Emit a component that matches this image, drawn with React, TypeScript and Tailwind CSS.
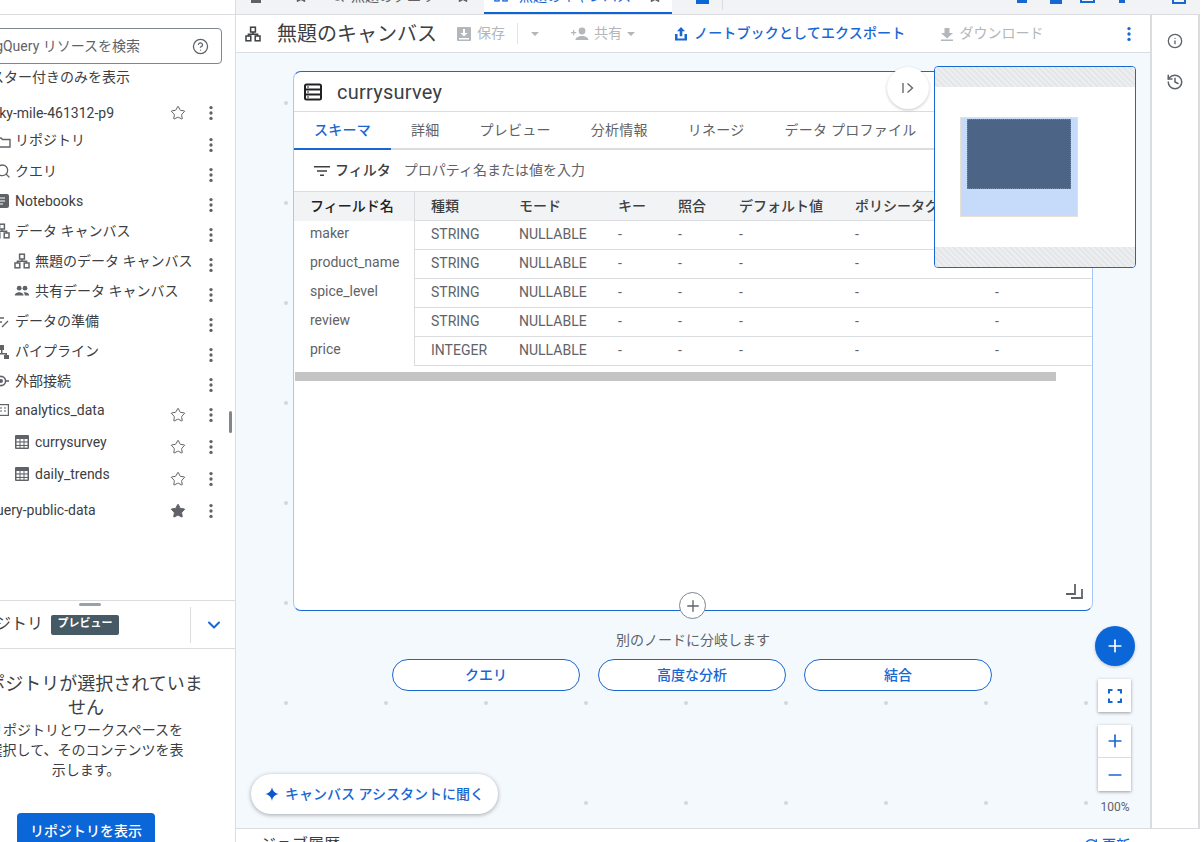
import { ChevronDown, Star, HelpCircle, Plus, Minus, Info, History, Search, RefreshCw } from 'lucide-react';

const font = "font-['Roboto','Noto_Sans_CJK_JP',sans-serif]";

function Kebab({ className = '' }: { className?: string }) {
  return (
    <svg viewBox="0 0 24 24" width="20" height="20" className={className} fill="#5f6368">
      <circle cx="12" cy="5.5" r="2" />
      <circle cx="12" cy="12" r="2" />
      <circle cx="12" cy="18.5" r="2" />
    </svg>
  );
}

function CanvasIcon({ size = 16, color = '#5f6368' }: { size?: number; color?: string }) {
  return (
    <svg viewBox="0 0 16 16" width={size} height={size} fill="none" stroke={color} strokeWidth="1.5">
      <rect x="5.6" y="1.2" width="4.8" height="4.8" />
      <rect x="1" y="10" width="4.8" height="4.8" />
      <rect x="10.2" y="10" width="4.8" height="4.8" />
      <path d="M8 6v2.2H3.4V10M8 8.2h4.6V10" />
    </svg>
  );
}

function TableIcon() {
  return (
    <svg viewBox="0 0 14 14" width="14" height="14" className="shrink-0">
      <rect width="14" height="14" rx="1" fill="#5f6368" />
      <rect x="1.5" y="4" width="3" height="2.4" fill="#fff" />
      <rect x="5.5" y="4" width="3" height="2.4" fill="#fff" />
      <rect x="9.5" y="4" width="3" height="2.4" fill="#fff" />
      <rect x="1.5" y="7.5" width="3" height="2.4" fill="#fff" />
      <rect x="5.5" y="7.5" width="3" height="2.4" fill="#fff" />
      <rect x="9.5" y="7.5" width="3" height="2.4" fill="#fff" />
      <rect x="1.5" y="11" width="3" height="1.6" fill="#fff" />
      <rect x="5.5" y="11" width="3" height="1.6" fill="#fff" />
      <rect x="9.5" y="11" width="3" height="1.6" fill="#fff" />
    </svg>
  );
}

function PeopleIcon() {
  return (
    <svg viewBox="0 0 16 16" width="16" height="16" fill="#5f6368" className="shrink-0">
      <circle cx="5.2" cy="5.2" r="2.4" />
      <circle cx="11" cy="5.2" r="2.4" />
      <path d="M.8 12.5c0-2.2 2.6-3.2 4.4-3.2s4.4 1 4.4 3.2zM10.8 12.5c0-1.4-.5-2.4-1.3-3.1.6-.1 1.1-.1 1.5-.1 1.8 0 4.2 1 4.2 3.2z" />
    </svg>
  );
}

type Row = {
  label: string;
  h: string;
  left: string;
  icon?: React.ReactNode;
  star?: 'off' | 'on';
  lift?: string;
};

const rows: Row[] = [
  { label: 'sky-mile-461312-p9', h: 'h-[30px] mb-[2px]', left: '-ml-[8px]', star: 'off' },
  {
    label: 'リポジトリ', h: 'h-[30px]', left: 'pl-[15px]', lift: 'mb-[10px]',
    icon: <svg viewBox="0 0 16 16" width="16" height="16" className="absolute -left-[5px] top-[4px]" fill="none" stroke="#5f6368" strokeWidth="1.4"><path d="M1 4h5l1.5 1.5H15V13H1z" /></svg>,
  },
  {
    label: 'クエリ', h: 'h-[30px]', left: 'pl-[15px]', lift: 'mb-[8px]',
    icon: <Search size={16} color="#5f6368" className="absolute -left-[5px] top-[3px]" />,
  },
  {
    label: 'Notebooks', h: 'h-[30px]', left: 'pl-[15px]', lift: 'mb-[8px]',
    icon: <svg viewBox="0 0 14 14" width="14" height="14" className="absolute -left-[5px] top-[4px]"><rect width="14" height="14" rx="2" fill="#5f6368" /><path d="M2 4h8M2 7h8M2 10h6" stroke="#fff" strokeWidth="1.2" /></svg>,
  },
  {
    label: 'データ キャンバス', h: 'h-[30px]', left: 'pl-[15px]', lift: 'mb-[8px]',
    icon: <div className="absolute -left-[6px] top-[3px]"><CanvasIcon size={16} /></div>,
  },
  {
    label: '無題のデータ キャンバス', h: 'h-[30px]', left: 'pl-[35px]', lift: 'mb-[8px]',
    icon: <div className="absolute left-[14px] top-[3px]"><CanvasIcon size={16} /></div>,
  },
  {
    label: '共有データ キャンバス', h: 'h-[30px]', left: 'pl-[35px]', lift: 'mb-[8px]',
    icon: <div className="absolute left-[14px] top-[3px]"><PeopleIcon /></div>,
  },
  {
    label: 'データの準備', h: 'h-[30px]', left: 'pl-[15px]', lift: 'mb-[8px]',
    icon: <svg viewBox="0 0 14 14" width="14" height="14" className="absolute -left-[4px] top-[5px]" fill="none" stroke="#5f6368" strokeWidth="1.4"><path d="M0 3h8M0 7h6M6 12l6-6" /></svg>,
  },
  {
    label: 'パイプライン', h: 'h-[30px]', left: 'pl-[15px]', lift: 'mb-[8px]',
    icon: <svg viewBox="0 0 16 16" width="16" height="16" className="absolute -left-[6px] top-[4px]" fill="#5f6368"><rect x="5" y="1" width="5" height="5" /><rect x="0" y="11" width="5" height="4" /><rect x="10" y="11" width="5" height="4" /><path d="M7 6h1.5v3H13v2h-1.5v-.5h-8v.5H2V9h5z" /></svg>,
  },
  {
    label: '外部接続', h: 'h-[30px]', left: 'pl-[15px]', lift: 'mb-[8px]',
    icon: <svg viewBox="0 0 16 16" width="16" height="16" className="absolute -left-[4px] top-[3px]" fill="none" stroke="#5f6368" strokeWidth="1.6"><circle cx="5" cy="8" r="4.6" /><circle cx="5" cy="8" r="1.2" fill="#5f6368" /><path d="M10 8h3" /></svg>,
  },
  {
    label: 'analytics_data', h: 'h-[30px]', left: 'pl-[15px]', star: 'off', lift: 'mb-[10px]',
    icon: <svg viewBox="0 0 12 12" width="12" height="12" className="absolute -left-[3px] top-[4px]" fill="none" stroke="#5f6368" strokeWidth="1.2"><rect x=".6" y=".6" width="10.8" height="10.8" /><path d="M3 4h2M7 4h2M3 7h2M7 7h2" /></svg>,
  },
  { label: 'currysurvey', h: 'mt-[1px] h-[32px]', left: 'pl-[35px]', star: 'off', lift: 'mb-[10px]', icon: <div className="absolute left-[15px] top-[4px]"><TableIcon /></div> },
  { label: 'daily_trends', h: 'h-[32px]', left: 'pl-[35px]', star: 'off', lift: 'mb-[10px]', icon: <div className="absolute left-[15px] top-[4px]"><TableIcon /></div> },
  { label: 'bigquery-public-data', h: 'h-[32px]', left: '-ml-[31px]', star: 'on', lift: 'mb-[2px]' },
];

function TreeRow({ row }: { row: Row }) {
  return (
    <div className={`relative flex items-center pr-[14px] ${row.h}`}>
      {row.icon}
      <span className={`flex-1 whitespace-nowrap text-[14px] text-[#3c4043] ${row.left} ${row.lift ?? ''}`}>{row.label}</span>
      {row.star === 'off' && <Star size={16} color="#5f6368" strokeWidth={1.5} className="mr-[15px]" />}
      {row.star === 'on' && <Star size={16} color="#5f6368" fill="#5f6368" strokeWidth={1.5} className="mr-[15px]" />}
      <Kebab />
    </div>
  );
}

function Sidebar() {
  return (
    <aside className="relative flex h-full w-[236px] shrink-0 flex-col overflow-hidden border-r border-[#dadce0] bg-white">
      <div className="h-[15px] shrink-0 border-b border-[#dadce0]" />
      <div className="relative mt-[13px] ml-[-20px] flex h-[36px] w-[242px] shrink-0 items-center justify-between rounded-[4px] border border-[#80868b] pr-[12px] pl-[2px]">
        <span className="whitespace-nowrap text-[14px] text-[#5f6368]">BigQuery リソースを検索</span>
        <HelpCircle size={17} color="#5f6368" strokeWidth={1.8} />
      </div>
      <div className="mt-[3px] ml-[-10px] h-[20px] whitespace-nowrap text-[14px] leading-[20px] text-[#3c4043]">スター付きのみを表示</div>
      <div className="mt-[11px] flex shrink-0 flex-col">
        {rows.map((row) => (
          <TreeRow key={row.label} row={row} />
        ))}
      </div>
      <div className="absolute top-[411px] left-[229px] h-[22px] w-[3px] rounded-full bg-[#80868b]" />

      <div className="relative mt-auto flex h-[49px] shrink-0 items-center border-y border-[#dadce0] pr-[10px]">
        <div className="absolute top-[2px] left-[79px] h-[3px] w-[22px] rounded-full bg-[#9aa0a6]" />
        <span className="mb-[2px] ml-[-37px] whitespace-nowrap text-[16px] text-[#3c4043]">リポジトリ</span>
        <span className="ml-[8px] flex h-[20px] w-[68px] items-center justify-center rounded-[2px] bg-[#455a64] text-[11px] font-bold text-white">プレビュー</span>
        <div className="ml-auto flex h-[36px] items-center border-l border-[#dadce0] pl-[13px] pr-[1px]">
          <ChevronDown size={20} color="#1967d2" strokeWidth={2.4} />
        </div>
      </div>
      <div className="mt-[23px] ml-[-34px] w-[240px] shrink-0 text-center text-[18px] leading-[24px] text-[#3c4043]">リポジトリが選択されていません</div>
      <div className="mx-auto ml-[-14px] w-[200px] shrink-0 text-center text-[14px] leading-[20px] text-[#3c4043]">リポジトリとワークスペースを選択して、そのコンテンツを表示します。</div>
      <button type="button" className="mt-[33px] mb-[-7px] ml-[17px] flex h-[36px] w-[138px] shrink-0 items-center justify-center rounded-[4px] bg-[#0b66d8] text-[14px] font-medium text-white">
        リポジトリを表示
      </button>
    </aside>
  );
}

function TopTabs() {
  return (
    <div className="relative flex h-[15px] shrink-0 items-start overflow-hidden border-b border-[#dadce0] bg-[#f1f3f4]">
      <div className="ml-[15px] h-[3px] w-[10px] bg-[#5f6368]" />
      <Star size={14} color="#5f6368" fill="#5f6368" className="ml-[33px] -mt-[11px] shrink-0" />
      <Search size={14} color="#5f6368" className="ml-[23px] -mt-[11px] shrink-0" />
      <span className="ml-[6px] -mt-[11px] w-[88px] whitespace-nowrap text-[14px] leading-[14px] text-[#5f6368]">無題のクエリ</span>
      <Star size={14} color="#5f6368" fill="#5f6368" className="ml-[17px] -mt-[11px] shrink-0" />
      <div className="ml-[14px] flex h-[14px] w-[188px] shrink-0 items-start border-b-[2px] border-[#0b66d8] bg-white pl-[10px]">
        <div className="-mt-[12px] shrink-0"><CanvasIcon size={14} color="#1967d2" /></div>
        <span className="ml-[11px] -mt-[11px] w-[106px] whitespace-nowrap text-[14px] leading-[14px] text-[#1967d2]">無題のキャンバス</span>
        <Star size={14} color="#5f6368" fill="#5f6368" className="ml-[23px] -mt-[11px] shrink-0" />
      </div>
      <div className="ml-[24px] h-[4px] w-[13px] bg-[#0b66d8]" />
      <div className="ml-[13px] h-[10px] w-px bg-[#dadce0]" />
      <div className="absolute top-0 left-[781px] h-[3px] w-[10px] bg-[#1967d2]" />
      <div className="absolute top-0 left-[814px] h-[4px] w-[12px] bg-[#1967d2]" />
      <div className="absolute top-0 left-[844px] h-[3px] w-[15px] border-x-2 border-b-2 border-[#1967d2]" />
      <div className="absolute top-0 left-[883px] h-[3px] w-[6px] bg-[#1967d2]" />
      <div className="absolute top-0 left-[936px] h-[4px] w-[14px] border-x-2 border-b-2 border-[#1967d2]" />
    </div>
  );
}

function ToolbarButton({ label, icon, className = '' }: { label: string; icon: React.ReactNode; className?: string }) {
  return (
    <div className={`flex items-center gap-[5px] whitespace-nowrap text-[14px] text-[#b3b6ba] ${className}`}>
      {icon}
      {label}
    </div>
  );
}

function Toolbar() {
  return (
    <div className="flex h-[38px] shrink-0 items-center border-b border-[#dadce0] bg-white pl-[9px]">
      <CanvasIcon size={16} color="#3c4043" />
      <h1 className="ml-[16px] w-[177px] whitespace-nowrap text-[20px] font-normal text-[#3c4043]">無題のキャンバス</h1>
      <ToolbarButton
        label="保存"
        icon={<svg viewBox="0 0 16 16" width="16" height="16" fill="#b3b6ba"><path fillRule="evenodd" d="M2 1h12a1 1 0 0 1 1 1v12a1 1 0 0 1-1 1H2a1 1 0 0 1-1-1V2a1 1 0 0 1 1-1zm5 2v4H4.500L8 10.500 11.500 7H9V3zM3 12v1.500h10V12z" /></svg>}
        className="ml-[2px] border-r border-[#e3e4e6] pr-[12px]"
      />
      <div className="ml-[13px] h-0 w-0 border-x-[4px] border-t-[4px] border-x-transparent border-t-[#b3b6ba]" />
      <ToolbarButton
        label="共有"
        icon={<svg viewBox="0 0 18 14" width="18" height="14" fill="#b3b6ba"><circle cx="11" cy="4" r="3.400" /><path d="M4.500 13c0-2.800 4-4 6.500-4s6.500 1.200 6.500 4zM0 5h2V3h1.200v2h2v1.200h-2v2H2v-2H0z" /></svg>}
        className="ml-[32px]"
      />
      <div className="ml-[5px] h-0 w-0 border-x-[4px] border-t-[4px] border-x-transparent border-t-[#b3b6ba]" />
      <div className="ml-[39px] flex items-center gap-[6px] whitespace-nowrap text-[14px] font-medium tracking-[0.15px] text-[#1967d2]">
        <svg viewBox="0 0 14 14" width="14" height="14" fill="#1967d2"><path d="M7 0l4 4.200H8.300v5H5.700v-5H3zM1 7h2.500v4.500h7V7H13v6.500H1z" /></svg>
        ノートブックとしてエクスポート
      </div>
      <ToolbarButton
        label="ダウンロード"
        icon={<svg viewBox="0 0 14 14" width="14" height="14" fill="#b3b6ba"><path d="M4.500 1h5v5H13L7 11.500 1 6h3.500zM1 12.500h12V14H1z" /></svg>}
        className="ml-[35px]"
      />
      <Kebab className="ml-auto mr-[11px] [&_circle]:fill-[#1967d2]" />
    </div>
  );
}

const columns = [
  { label: '種類', w: 'w-[88px]' },
  { label: 'モード', w: 'w-[99px]' },
  { label: 'キー', w: 'w-[60px]' },
  { label: '照合', w: 'w-[61px]' },
  { label: 'デフォルト値', w: 'w-[116px]' },
  { label: 'ポリシータグ', w: 'w-[140px]' },
  { label: '', w: 'w-[97px]' },
];

const fields = [
  { name: 'maker', type: 'STRING' },
  { name: 'product_name', type: 'STRING' },
  { name: 'spice_level', type: 'STRING' },
  { name: 'review', type: 'STRING' },
  { name: 'price', type: 'INTEGER' },
];

const tabs = ['スキーマ', '詳細', 'プレビュー', '分析情報', 'リネージ', 'データ プロファイル'];

function NodeCard() {
  return (
    <div className="absolute top-[18px] left-[57px] flex h-[540px] w-[800px] flex-col rounded-[8px] border border-[#1967d2] border-x-[#a8c7fa] bg-white">
      <div className="flex h-[40px] shrink-0 items-center border-b border-[#dadce0] pl-[10px]">
        <svg viewBox="0 0 18 18" width="18" height="18" fill="none" stroke="#202124" strokeWidth="2">
          <rect x="1" y="1.500" width="16" height="15" rx="1.500" />
          <path d="M1 6.500h16M1 11.500h16M3.500 4h1M3.500 9h1M3.500 14h1" />
        </svg>
        <span className="ml-[15px] text-[20px] tracking-[0.25px] text-[#3c4043]">currysurvey</span>
      </div>
      <div className="flex h-[38px] shrink-0 border-b-[2px] border-[#dadce0] text-[14px] tracking-[0.25px] text-[#5f6368]">
        {tabs.map((tab, i) => (
          <div
            key={tab}
            className={`flex items-center whitespace-nowrap px-[20px] ${i === 0 ? '-mb-[2px] border-b-[2px] border-[#1967d2] font-medium text-[#1967d2]' : ''}`}
          >
            {tab}
          </div>
        ))}
      </div>
      <div className="flex h-[41px] shrink-0 items-center pl-[20px] text-[14px]">
        <svg viewBox="0 0 16 12" width="16" height="12" fill="#3c4043"><path d="M0 1h16v1.500H0zM3 5.200h10v1.500H3zM6 9.500h4V11H6z" /></svg>
        <span className="ml-[5px] font-medium text-[#3c4043]">フィルタ</span>
        <span className="ml-[13px] text-[#5f6368]">プロパティ名または値を入力</span>
      </div>
      <div className="flex border-t border-[#dadce0]">
        <div className="w-[121px] shrink-0 border-r border-[#dadce0]">
          <div className="flex h-[29px] items-center bg-[#f1f3f4] pl-[16px] text-[14px] font-medium text-[#202124]">フィールド名</div>
          {fields.map((f) => (
            <div key={f.name} className="flex h-[29px] items-start pl-[16px] text-[14px] leading-[25px] text-[#5f6368]">{f.name}</div>
          ))}
        </div>
        <div className="flex-1">
          <div className="flex h-[29px] items-center border-b border-[#dadce0] bg-[#f1f3f4] pl-[16px] text-[14px] font-medium text-[#3c4043]">
            {columns.map((c) => (
              <div key={c.label} className={`shrink-0 whitespace-nowrap ${c.w}`}>{c.label}</div>
            ))}
          </div>
          {fields.map((f) => (
            <div key={f.name} className="flex h-[29px] items-center border-b border-[#dadce0] pb-[2px] pl-[16px] text-[14px] text-[#5f6368]">
              <div className="w-[88px] shrink-0">{f.type}</div>
              <div className="w-[99px] shrink-0">NULLABLE</div>
              <div className="w-[60px] shrink-0">-</div>
              <div className="w-[61px] shrink-0">-</div>
              <div className="w-[116px] shrink-0">-</div>
              <div className="w-[140px] shrink-0">-</div>
              <div className="w-[97px] shrink-0">-</div>
            </div>
          ))}
        </div>
      </div>
      <div className="mt-[6px] ml-[1px] h-[9px] w-[761px] shrink-0 bg-[#c4c4c4]" />
      <svg viewBox="0 0 18 18" width="18" height="18" className="absolute right-[9px] bottom-[10px]" fill="none" stroke="#5f6368" strokeWidth="1.800">
        <path d="M1 12h9V2M6 16h11V7" />
      </svg>
    </div>
  );
}

function Minimap() {
  return (
    <div className="absolute top-[13px] left-[698px] z-10 flex h-[202px] w-[202px] flex-col overflow-hidden rounded-[4px] border border-[#1967d2] bg-white">
      <div className="h-[20px] bg-[repeating-linear-gradient(45deg,#eceef0,#eceef0_2px,#e4e6e9_2px,#e4e6e9_4px)]" />
      <div className="flex flex-1 items-center pl-[25px]">
        <div className="h-[100px] w-[118px] border border-[#e6dfd8] bg-[#c6dafa] pt-[1px] pl-[6px]">
          <div className="h-[70px] w-[104px] border border-dotted border-[#6c82a0] bg-[#4c6486]" />
        </div>
      </div>
      <div className="h-[20px] bg-[repeating-linear-gradient(45deg,#eceef0,#eceef0_2px,#e4e6e9_2px,#e4e6e9_4px)]" />
    </div>
  );
}

const dotXs = [48, 148, 248, 348, 448, 548, 648, 748, 848];
const dotYs = [48, 148, 248, 348, 448, 548, 648, 748];

function Canvas() {
  return (
    <div className="relative flex-1 overflow-hidden bg-[#f4f9fe]">
      {dotYs.map((y) =>
        dotXs.map((x) => (
          <div key={`${x}-${y}`} className="absolute h-[4px] w-[4px] rounded-full bg-[#d3d6da]" style={{ left: x, top: y }} />
        ))
      )}
      <NodeCard />
      <Minimap />
      <div className="absolute top-[14px] left-[651px] flex h-[42px] w-[42px] items-center justify-center rounded-full bg-white shadow-[0_1px_3px_rgba(60,64,67,0.3)]">
        <svg viewBox="0 0 14 12" width="14" height="12" fill="none" stroke="#5f6368" strokeWidth="1.300"><path d="M2 1v10M6.500 1.500L11.500 6l-5 4.500" /></svg>
      </div>
      <div className="absolute top-[539px] left-[443px] flex h-[27px] w-[27px] items-center justify-center rounded-full border border-[#80868b] bg-white">
        <Plus size={18} color="#5f6368" strokeWidth={1.8} />
      </div>
      <div className="absolute top-[578px] left-[157px] flex w-[600px] flex-col items-center">
        <div className="text-[14px] leading-[18px] text-[#5f6368]">別のノードに分岐します</div>
        <div className="mt-[10px] mr-[2px] flex gap-[18px]">
          {['クエリ', '高度な分析', '結合'].map((label) => (
            <button key={label} type="button" className="flex h-[32px] w-[188px] items-center justify-center rounded-full border border-[#1967d2] bg-white text-[14px] font-medium text-[#1967d2]">
              {label}
            </button>
          ))}
        </div>
      </div>
      <button type="button" className="absolute top-[721px] left-[15px] flex h-[40px] w-[247px] items-center justify-center gap-[6px] rounded-full bg-white text-[14px] font-medium text-[#1967d2] shadow-[0_1px_4px_rgba(60,64,67,0.45)]">
        <svg viewBox="0 0 14 14" width="14" height="14" fill="#0b57d0"><path d="M7 0c.5 3.800 3 6.500 7 7-4 .5-6.500 3.200-7 7-.5-3.800-3-6.500-7-7 4-.5 6.500-3.200 7-7z" /></svg>
        キャンバス アシスタントに聞く
      </button>
      <button type="button" className="absolute top-[573px] left-[859px] flex h-[40px] w-[40px] items-center justify-center rounded-full bg-[#0b66d8] shadow-[0_1px_3px_rgba(60,64,67,0.3)]">
        <Plus size={20} color="#fff" strokeWidth={2} />
      </button>
      <div className="absolute top-[626px] left-[862px] flex h-[33px] w-[33px] items-center justify-center bg-white shadow-[0_1px_3px_rgba(60,64,67,0.5)]">
        <svg viewBox="0 0 14 14" width="14" height="14" fill="none" stroke="#1967d2" strokeWidth="2"><path d="M1 4.500V1h3.500M9.500 1H13v3.500M13 9.500V13H9.500M4.500 13H1V9.500" /></svg>
      </div>
      <div className="absolute top-[672px] left-[862px] flex h-[66px] w-[33px] flex-col items-center bg-white shadow-[0_1px_3px_rgba(60,64,67,0.5)]">
        <div className="flex h-[33px] w-full items-center justify-center border-b border-[#dadce0]"><Plus size={20} color="#1967d2" strokeWidth={2} /></div>
        <div className="flex h-[33px] items-center justify-center"><Minus size={20} color="#1967d2" strokeWidth={2} /></div>
      </div>
      <div className="absolute top-[746px] left-[849px] w-[60px] text-center text-[12px] leading-[16px] text-[#5f6368]">100%</div>
    </div>
  );
}

export default function App() {
  return (
    <div className={`flex h-[842px] w-[1202px] overflow-hidden bg-white ${font}`}>
      <Sidebar />
      <main className="flex h-full flex-1 flex-col pr-[2px]">
        <TopTabs />
        <div className="flex h-[814px] shrink-0">
          <div className="flex flex-1 flex-col border-b border-[#dadce0]">
            <Toolbar />
            <Canvas />
          </div>
          <div className="flex w-[50px] shrink-0 flex-col items-center gap-[24px] border-x-2 border-x-[#dadce0] border-b border-b-[#dadce0] bg-white pt-[18px]">
            <Info size={16} color="#5f6368" strokeWidth={2} />
            <History size={18} color="#5f6368" strokeWidth={2} />
          </div>
        </div>
        <div className="flex flex-1 items-start justify-between pt-[6px] pr-[70px] pl-[24px]">
          <span className="whitespace-nowrap text-[16px] leading-[20px] text-[#3c4043]">ジョブ履歴</span>
          <span className="flex items-center gap-[4px] whitespace-nowrap text-[14px] leading-[20px] font-medium text-[#1967d2]">
            <RefreshCw size={14} color="#1967d2" strokeWidth={2.4} />
            更新
          </span>
        </div>
      </main>
    </div>
  );
}
